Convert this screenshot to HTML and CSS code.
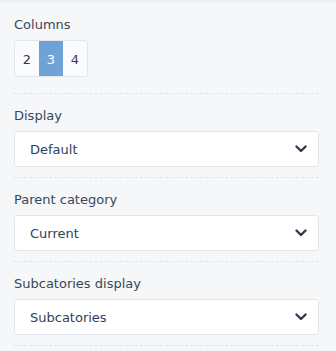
FILE: index.html
```html
<!DOCTYPE html>
<html lang="en">
<head>
    <meta charset="UTF-8">
    <meta name="viewport" content="width=device-width, initial-scale=1.0">
    <title>Category settings</title>
    <link rel="stylesheet" href="styles.css">
</head>
<body>
    <div class="panel">
        <div class="field first">
            <div class="label">Columns</div>
            <div class="btn-group">
                <span class="btn">2</span>
                <span class="btn active">3</span>
                <span class="btn purple">4</span>
            </div>
        </div>

        <div class="field">
            <div class="label">Display</div>
            <div class="select">
                <span>Default</span>
                <svg class="chevron" width="12" height="8" viewBox="0 0 12 8"><path d="M1.5 1.5 L6 6 L10.5 1.5" fill="none" stroke="#2e3d4f" stroke-width="2.4" stroke-linecap="round" stroke-linejoin="round"/></svg>
            </div>
        </div>

        <div class="field">
            <div class="label">Parent category</div>
            <div class="select">
                <span>Current</span>
                <svg class="chevron" width="12" height="8" viewBox="0 0 12 8"><path d="M1.5 1.5 L6 6 L10.5 1.5" fill="none" stroke="#2e3d4f" stroke-width="2.4" stroke-linecap="round" stroke-linejoin="round"/></svg>
            </div>
        </div>

        <div class="field">
            <div class="label">Subcatories display</div>
            <div class="select">
                <span>Subcatories</span>
                <svg class="chevron" width="12" height="8" viewBox="0 0 12 8"><path d="M1.5 1.5 L6 6 L10.5 1.5" fill="none" stroke="#2e3d4f" stroke-width="2.4" stroke-linecap="round" stroke-linejoin="round"/></svg>
            </div>
        </div>
    </div>
</body>
</html>
```

FILE: styles.css
```css
body {
    margin: 0;
    background: #f5f7f9;
    border-top: 3px solid #edf1f5;
    font-family: "DejaVu Sans", sans-serif;
    font-size: 13px;
    color: #3a4658;
}
.panel {
    padding: 0 17px 0 14px;
}
.field {
    padding: 11px 0 10px;
    border-bottom: 1px dashed #dfe4e9;
}
.field.first {
    padding-bottom: 16px;
}
.label {
    padding-top: 2px;
    line-height: 18px;
    margin-bottom: 6px;
}
.btn-group {
    display: inline-flex;
    border: 1px solid #e3e7eb;
    border-radius: 3px;
    background: #fafbfc;
    overflow: hidden;
}
.btn {
    width: 24px;
    height: 35px;
    display: flex;
    align-items: center;
    justify-content: center;
    padding-top: 1px;
    box-sizing: border-box;
    color: #2f3a4a;
}
.btn.active {
    background: #6fa3d7;
    color: #fff;
}
.btn.purple {
    color: #44356a;
}
.select {
    height: 34px;
    border: 1px solid #e2e6ea;
    border-radius: 3px;
    background: #fff;
    display: flex;
    align-items: center;
    justify-content: space-between;
    padding: 0 11px 0 15px;
    color: #34405a;
}
.chevron {
    display: block;
}
```
